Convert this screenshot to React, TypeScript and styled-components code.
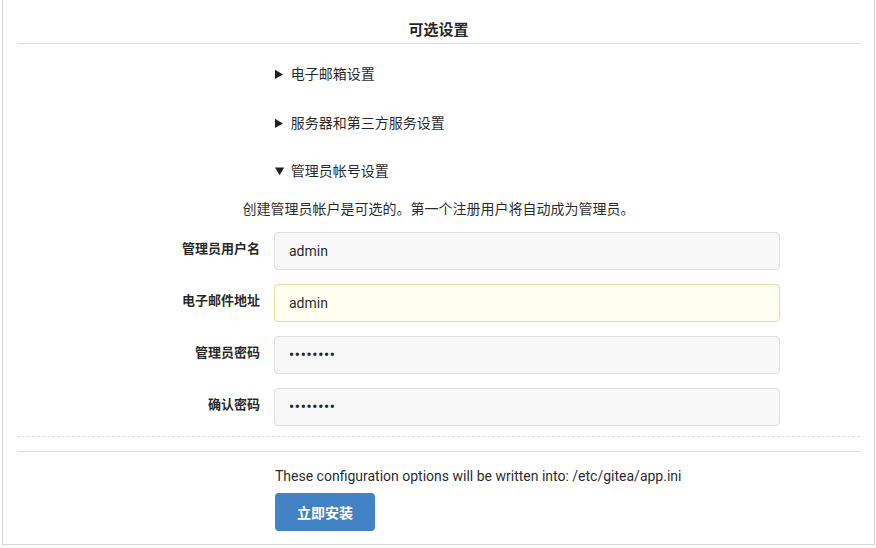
import React from "react";
import styled, { createGlobalStyle } from "styled-components";

const Global = createGlobalStyle`
  html, body { margin: 0; padding: 0; background: #fff; }
  body {
    font-family: Roboto, "Noto Sans CJK SC", sans-serif;
    font-size: 14px;
    color: rgba(0, 0, 0, 0.87);
  }
  * { box-sizing: border-box; }
`;

const Page = styled.div`
  padding: 0 1px 0 2px;
`;

const Segment = styled.div`
  border: 1px solid #d4d4d5;
  border-top: none;
  padding: 0 14px 13px 14px;
  display: flex;
  flex-direction: column;
`;

const Title = styled.h4`
  margin: 20px 0 0 0;
  padding: 0 0 3px 0;
  font-size: 15px;
  line-height: 20px;
  font-weight: 700;
  text-align: center;
  border-bottom: 1px solid #dededf;
`;

const Section = styled.details<{ $gap: number }>`
  margin-top: ${(p) => p.$gap}px;
`;

const Summary = styled.summary`
  margin-left: 258px;
  line-height: 20px;
  cursor: pointer;
  &::marker {
    font-size: 14px;
  }
`;

const SummaryText = styled.span`
  margin-left: 1px;
`;

const Help = styled.p`
  margin: 18px 0 13px 0;
  line-height: 20px;
  text-align: center;
`;

const Fields = styled.div`
  display: flex;
  flex-direction: column;
  gap: 14px;
`;

const Field = styled.div`
  display: flex;
  align-items: center;
`;

const Label = styled.label`
  width: 243px;
  text-align: right;
  font-size: 13px;
  line-height: 18px;
  font-weight: 700;
  margin: 0 14px 4px 0;
`;

const Input = styled.input<{ $warn?: boolean }>`
  width: 506px;
  height: 38px;
  padding: 0 14px;
  font-family: Roboto, "Noto Sans CJK SC", sans-serif;
  font-size: 14px;
  color: rgba(0, 0, 0, 0.87);
  background: ${(p) => (p.$warn ? "#fffff0" : "#f8f8f8")};
  border: 1px solid ${(p) => (p.$warn ? "#e3de9f" : "#dedede")};
  border-radius: 4px;
  outline: none;
  &[type="password"] {
    letter-spacing: 0.8px;
    font-weight: 700;
  }
`;

const Dashed = styled.div`
  margin-top: 10px;
  border-top: 1px dashed #dededf;
`;

const Solid = styled.div`
  margin-top: 14px;
  border-top: 1px solid #dededf;
`;

const Footer = styled.div`
  margin-left: 258px;
  display: flex;
  flex-direction: column;
  align-items: flex-start;
`;

const Note = styled.p`
  margin: 14px 0 7px 0;
  line-height: 20px;
`;

const Button = styled.button`
  width: 100px;
  height: 38px;
  border: none;
  border-radius: 4px;
  background: #4183c4;
  color: #fff;
  font-family: Roboto, "Noto Sans CJK SC", sans-serif;
  font-size: 14px;
  font-weight: 700;
  cursor: pointer;
`;

export default function App() {
  return (
    <Page>
      <Global />
      <Segment>
        <Title>可选设置</Title>
        <Section $gap={20}>
          <Summary>
            <SummaryText>电子邮箱设置</SummaryText>
          </Summary>
        </Section>
        <Section $gap={29}>
          <Summary>
            <SummaryText>服务器和第三方服务设置</SummaryText>
          </Summary>
        </Section>
        <Section $gap={28} open>
          <Summary>
            <SummaryText>管理员帐号设置</SummaryText>
          </Summary>
          <Help>创建管理员帐户是可选的。第一个注册用户将自动成为管理员。</Help>
          <Fields>
            <Field>
              <Label>管理员用户名</Label>
              <Input defaultValue="admin" />
            </Field>
            <Field>
              <Label>电子邮件地址</Label>
              <Input $warn defaultValue="admin" />
            </Field>
            <Field>
              <Label>管理员密码</Label>
              <Input type="password" defaultValue="admin123" />
            </Field>
            <Field>
              <Label>确认密码</Label>
              <Input type="password" defaultValue="admin123" />
            </Field>
          </Fields>
        </Section>
        <Dashed />
        <Solid />
        <Footer>
          <Note>These configuration options will be written into: /etc/gitea/app.ini</Note>
          <Button>立即安装</Button>
        </Footer>
      </Segment>
    </Page>
  );
}
